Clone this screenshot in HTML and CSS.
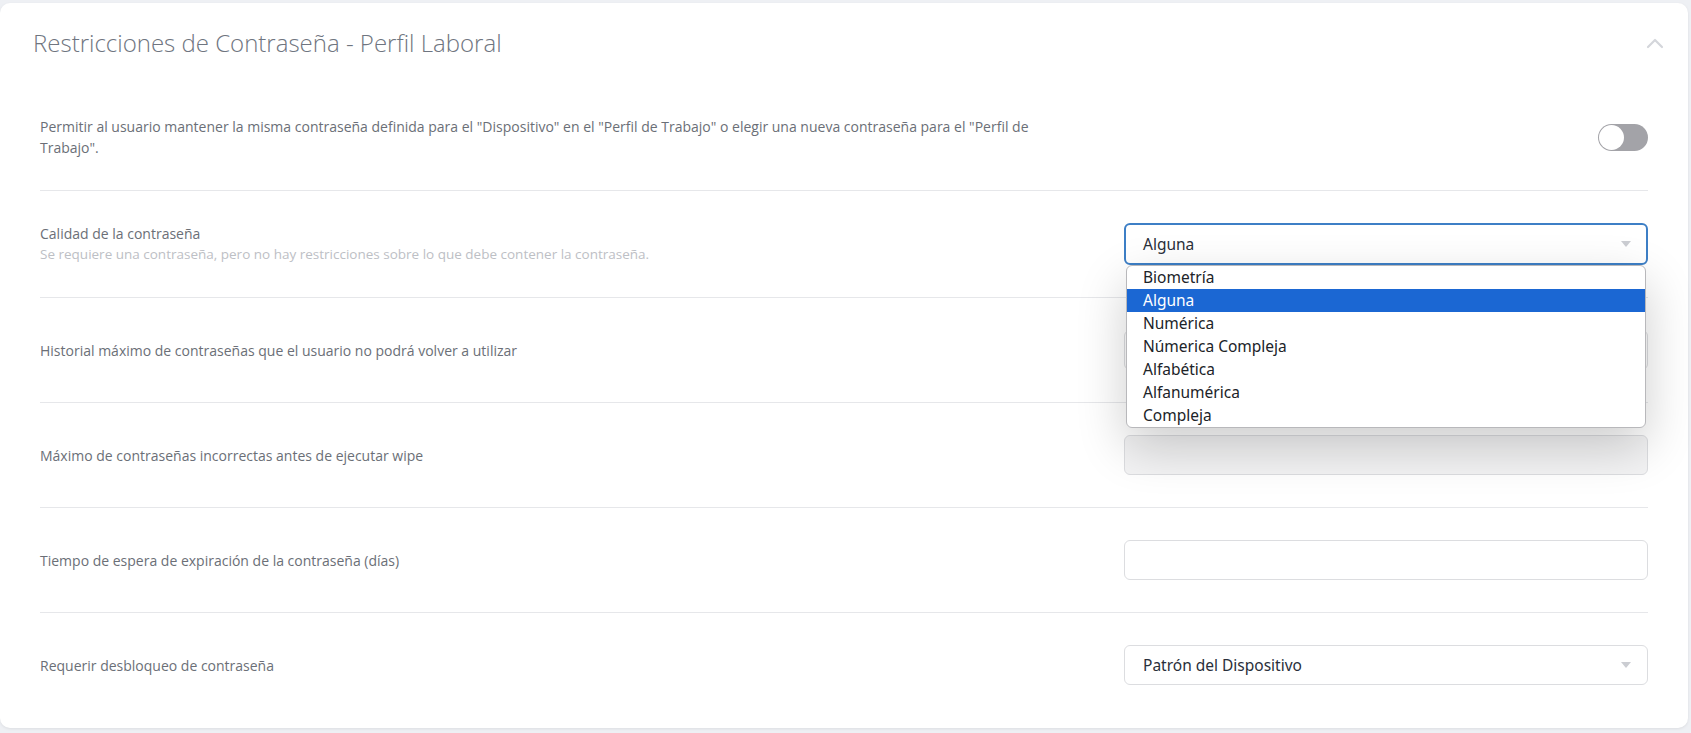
FILE: index.html
```html
<!DOCTYPE html>
<html lang="es">
<head>
<meta charset="utf-8">
<title>Restricciones de Contraseña - Perfil Laboral</title>
<link rel="stylesheet" href="styles.css">
</head>
<body>
<div class="card">
  <div class="card-header">
    <h2 class="card-title">Restricciones de Contraseña - Perfil Laboral</h2>
    <svg class="chevron" width="18" height="12" viewBox="0 0 18 12"><polyline points="2,10 9,3 16,10" fill="none" stroke="#d4d6db" stroke-width="2.2" stroke-linecap="round" stroke-linejoin="round"/></svg>
  </div>
  <div class="card-body">
    <div class="row">
      <div class="label">Permitir al usuario mantener la misma contraseña definida para el "Dispositivo" en el "Perfil de Trabajo" o elegir una nueva contraseña para el "Perfil de Trabajo".</div>
      <div class="control control-end">
        <span class="toggle"><span class="knob"></span></span>
      </div>
    </div>
    <div class="row">
      <div class="label label-tight">Calidad de la contraseña
        <div class="desc">Se requiere una contraseña, pero no hay restricciones sobre lo que debe contener la contraseña.</div>
      </div>
      <div class="control">
        <div class="select select-focus"><span>Alguna</span><span class="caret"></span></div>
        <ul class="dropdown">
          <li>Biometría</li>
          <li class="selected">Alguna</li>
          <li>Numérica</li>
          <li>Númerica Compleja</li>
          <li>Alfabética</li>
          <li>Alfanumérica</li>
          <li>Compleja</li>
        </ul>
      </div>
    </div>
    <div class="row">
      <div class="label">Historial máximo de contraseñas que el usuario no podrá volver a utilizar</div>
      <div class="control"><div class="input"></div></div>
    </div>
    <div class="row">
      <div class="label">Máximo de contraseñas incorrectas antes de ejecutar wipe</div>
      <div class="control"><div class="input input-muted"></div></div>
    </div>
    <div class="row">
      <div class="label">Tiempo de espera de expiración de la contraseña (días)</div>
      <div class="control"><div class="input"></div></div>
    </div>
    <div class="row row-last">
      <div class="label">Requerir desbloqueo de contraseña</div>
      <div class="control">
        <div class="select"><span>Patrón del Dispositivo</span><span class="caret"></span></div>
      </div>
    </div>
  </div>
</div>
</body>
</html>
```
FILE: styles.css
```css
* { box-sizing: border-box; }
html, body { margin: 0; padding: 0; }
body {
  background: #eef0f4;
  font-family: "Open Sans", "Noto Sans", sans-serif;
  width: 1691px;
  height: 733px;
  overflow: hidden;
}
.card {
  margin: 3px 3px 0 0;
  background: #fff;
  border-radius: 10px;
  box-shadow: 0 1px 3px rgba(0,0,0,0.08);
  height: 725px;
}
.card-header {
  height: 81px;
  display: flex;
  justify-content: space-between;
  align-items: flex-start;
  padding: 25px 24px 0 33px;
}
.card-title {
  margin: 0;
  font-weight: 300;
  font-size: 24px;
  line-height: 30px;
  color: #6f7580;
}
.chevron { margin-top: 9px; }
.card-body { padding: 0 40px; }
.row {
  display: grid;
  grid-template-columns: 1fr 524px;
  align-items: center;
  padding: 32px 0;
  border-bottom: 1px solid #e6e7ea;
}
.row-last { border-bottom: none; padding-bottom: 43px; }
.label {
  font-size: 14px;
  line-height: 21px;
  color: #6b6f77;
  padding-right: 70px;
}
.label-tight { line-height: 20px; }
.desc { color: #bdc0c5; font-size: 13.5px; }
.control { position: relative; }
.control-end { display: flex; justify-content: flex-end; }
.toggle {
  display: inline-block;
  width: 50px;
  height: 27px;
  border-radius: 14px;
  background: #a3a3a8;
  padding: 1px;
}
.knob {
  display: block;
  width: 25px;
  height: 25px;
  border-radius: 50%;
  background: #fff;
}
.select, .input {
  height: 40px;
  border: 1px solid #dcdde0;
  border-radius: 6px;
  background: #fff;
}
.select {
  display: flex;
  align-items: center;
  justify-content: space-between;
  padding: 0 16px 0 18px;
  font-family: "Noto Sans", "Open Sans", sans-serif;
  font-size: 15.5px;
  color: #2a2f3a;
}
.select-focus {
  height: 42px;
  border: 2px solid #3d7fc6;
  padding-left: 17px;
  padding-right: 15px;
}
.caret {
  width: 0; height: 0;
  border-left: 5px solid transparent;
  border-right: 5px solid transparent;
  border-top: 6px solid #cbcdd2;
}
.input-muted { background: #f3f3f4; }
.dropdown {
  position: absolute;
  top: 42px;
  left: 2px;
  right: 2px;
  margin: 0;
  padding: 0;
  list-style: none;
  background: #fff;
  border: 1px solid #b8b8bb;
  border-radius: 6px;
  box-shadow: 0 18px 50px rgba(0,0,0,0.2);
  font-family: "Noto Sans", "Open Sans", sans-serif;
  font-size: 15.5px;
  color: #202328;
  overflow: hidden;
  z-index: 5;
}
.dropdown li {
  height: 23px;
  line-height: 23px;
  padding-left: 16px;
}
.dropdown li.selected { background: #1b67d3; color: #fff; }
```
